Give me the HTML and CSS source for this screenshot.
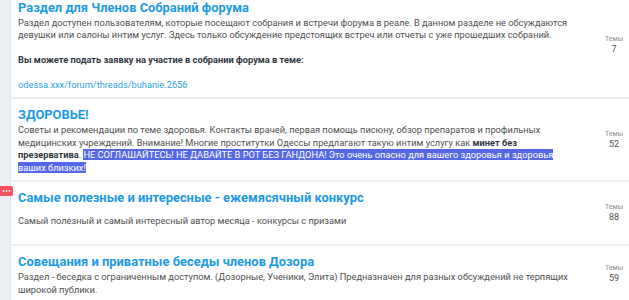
FILE: index.html
```html
<!DOCTYPE html>
<html lang="ru">
<head>
    <meta charset="UTF-8">
    <meta name="viewport" content="width=device-width, initial-scale=1.0">
    <title>Форум</title>
    <link rel="stylesheet" href="styles.css">
</head>
<body>
    <div class="page">
        <aside class="side-strip">
            <span class="side-tab">
                <svg width="13" height="10" viewBox="0 0 13 10">
                    <circle cx="3.5" cy="5" r="0.9" fill="#fff"/>
                    <circle cx="6.5" cy="5" r="0.9" fill="#fff"/>
                    <circle cx="9.5" cy="5" r="0.9" fill="#fff"/>
                </svg>
            </span>
        </aside>

        <div class="node-list">
            <div class="node node-first">
                <div class="node-main">
                    <h3 class="node-title"><a href="#">Раздел для Членов Собраний форума</a></h3>
                    <div class="node-description">
                        Раздел доступен пользователям, которые посещают собрания и встречи форума в реале. В данном разделе не обсуждаются девушки или салоны интим услуг. Здесь только обсуждение предстоящих встреч или отчеты с уже прошедших собраний.<br><br>
                        <b>Вы можете подать заявку на участие в собрании форума в теме:</b><br><br>
                        <a class="node-link" href="#">odessa.xxx/forum/threads/buhanie.2656</a>
                    </div>
                </div>
                <div class="node-stats">
                    <span class="stat-label">Темы</span>
                    <span class="stat-value">7</span>
                </div>
            </div>

            <div class="node">
                <div class="node-main">
                    <h3 class="node-title"><a href="#">ЗДОРОВЬЕ!</a></h3>
                    <div class="node-description">
                        Советы и рекомендации по теме здоровья. Контакты врачей, первая помощь писюну, обзор препаратов и профильных медицинских учреждений. Внимание! Многие проститутки Одессы предлагают такую интим услугу как <b>минет без презерватива</b>. <mark class="selected">НЕ СОГЛАШАЙТЕСЬ! НЕ ДАВАЙТЕ В РОТ БЕЗ ГАНДОНА! Это очень опасно для вашего здоровья и здоровья ваших близких!</mark>
                    </div>
                </div>
                <div class="node-stats">
                    <span class="stat-label">Темы</span>
                    <span class="stat-value">52</span>
                </div>
            </div>

            <div class="node node-spaced">
                <div class="node-main">
                    <h3 class="node-title"><a href="#">Самые полезные и интересные - ежемясячный конкурс</a></h3>
                    <div class="node-description">
                        Самый полезный и самый интересный автор месяца - конкурсы с призами
                    </div>
                </div>
                <div class="node-stats">
                    <span class="stat-label">Темы</span>
                    <span class="stat-value">88</span>
                </div>
            </div>

            <div class="node">
                <div class="node-main">
                    <h3 class="node-title"><a href="#">Совещания и приватные беседы членов Дозора</a></h3>
                    <div class="node-description">
                        Раздел - беседка с ограниченным доступом. (Дозорные, Ученики, Элита) Предназначен для разных обсуждений не терпящих широкой публики.
                    </div>
                </div>
                <div class="node-stats">
                    <span class="stat-label">Темы</span>
                    <span class="stat-value">59</span>
                </div>
            </div>
        </div>
    </div>
</body>
</html>
```

FILE: styles.css
```css
body {
    margin: 0;
    padding: 0;
    font-family: Roboto, "Noto Sans", sans-serif;
    background-color: #fff;
    color: #505050;
    overflow: hidden;
}

.page {
    display: flex;
    min-height: 300px;
}

.side-strip {
    position: relative;
    width: 10px;
    flex-shrink: 0;
    background-color: #eceff3;
    border-right: 1px solid #e0e4e9;
}

.side-tab {
    position: absolute;
    top: 186px;
    left: 0;
    width: 13px;
    height: 10px;
    background-color: #f2545e;
    border-radius: 0 2px 2px 0;
}

.side-tab svg {
    display: block;
}

.node-list {
    flex: 1;
    margin-top: -8px;
}

.node {
    display: flex;
    border-top: 2px solid #edf0f3;
}

.node-first {
    border-top: none;
}

.node-main {
    flex: 1;
    padding: 8px 21px 6px 7px;
}

.node-title {
    margin: 0;
    font-size: 12.9px;
    line-height: 16px;
    font-weight: 700;
}

.node-title a {
    color: #1c9ae6;
    text-decoration: none;
}

.node-description {
    margin-top: 1px;
    font-size: 9.25px;
    line-height: 12.4px;
    color: #505050;
}

.node-description b {
    color: #2f3640;
}

.node-link {
    color: #2ea3e3;
    text-decoration: none;
}

.selected {
    background-color: #5468e6;
    color: #fff;
}

.node-spaced .node-main {
    padding-bottom: 17px;
}

.node-spaced .node-description {
    margin-top: 9px;
}

.node-stats {
    width: 30px;
    display: flex;
    flex-direction: column;
    justify-content: center;
    align-items: center;
}

.stat-label {
    font-size: 7px;
    line-height: 9px;
    color: #8a8f96;
}

.stat-value {
    font-size: 9px;
    line-height: 11px;
    color: #505050;
}
```
